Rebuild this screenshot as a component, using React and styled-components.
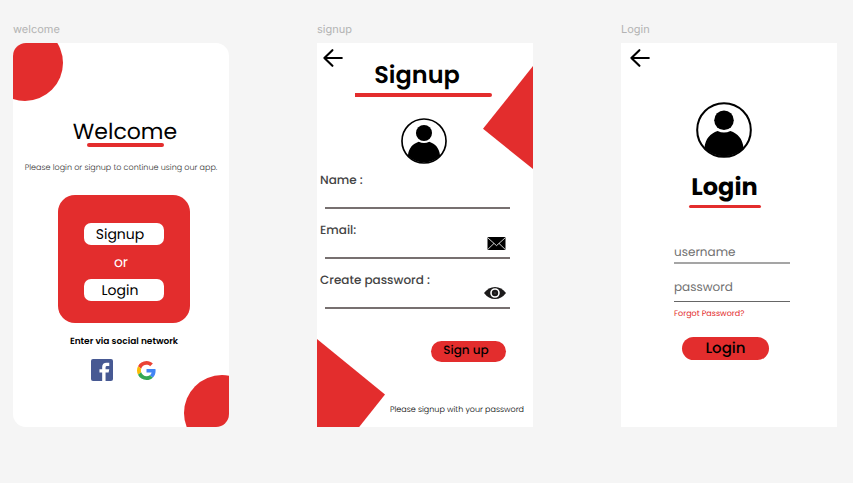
import React from "react";
import styled, { createGlobalStyle, css } from "styled-components";

const red = "#e32d2d";

const GlobalStyle = createGlobalStyle`
  *, *::before, *::after { box-sizing: border-box; }
  body {
    margin: 0;
    background: #f5f5f5;
    color: #000;
    font-family: Poppins, Inter, sans-serif;
    text-rendering: geometricPrecision;
  }
  h1, h2, p { margin: 0; }
  button, input { font-family: inherit; text-rendering: inherit; }
`;

const Board = styled.main`
  display: grid;
  grid-template-columns: repeat(3, minmax(0, 1fr));
  column-gap: 88px;
  padding: 22px 16px 56px 13px;
`;

const Artboard = styled.section`
  display: flex;
  flex-direction: column;
`;

const ArtboardName = styled.h2`
  height: 21px;
  font: 400 11px/14px Inter, sans-serif;
  color: #b3b3b3;
`;

const Screen = styled.div`
  position: relative;
  z-index: 0;
  display: flex;
  flex-direction: column;
  flex: 1;
  min-height: 384px;
  overflow: hidden;
  background: #fff;
  border-radius: ${(p) => (p.$rounded ? "13px" : "0")};
`;

const Disc = styled.span`
  position: absolute;
  z-index: -1;
  width: 76px;
  height: 76px;
  border-radius: 50%;
  background: ${red};
  ${(p) =>
    p.$corner === "top"
      ? css`top: -18px; left: -26px;`
      : css`right: -31px; bottom: -24px;`}
`;

const Shard = styled.span`
  position: absolute;
  z-index: -1;
  background: ${red};
  ${(p) =>
    p.$corner === "top"
      ? css`
          top: 23px;
          right: 0;
          width: 50px;
          height: 103px;
          clip-path: polygon(100% 0, 100% 100%, 0 61%);
        `
      : css`
          left: 0;
          bottom: 0;
          width: 68px;
          height: 88px;
          clip-path: polygon(0 0, 100% 63%, 62% 100%, 0 100%);
        `}
`;

const Header = styled.header`
  display: flex;
  flex-direction: column;
  align-items: center;
`;

const WelcomeHeader = styled(Header)`
  padding: 78px 0 0 8px;
`;

const SignupHeader = styled.header`
  display: flex;
  align-items: flex-start;
  padding-right: 42px;
`;

const LoginHeader = styled(Header)`
  padding: 13px 9px 0 0;
`;

const Title = styled.h1`
  font-size: ${(p) => p.$size}px;
  font-weight: ${(p) => p.$weight};
  line-height: ${(p) => p.$line}px;
`;

const SignupTitle = styled(Title)`
  flex: 1;
  margin-top: 16px;
  text-align: center;
`;

const Rule = styled.span`
  width: ${(p) => p.$width}px;
  height: ${(p) => p.$thick}px;
  background: ${red};
  border-radius: ${(p) => (p.$flatStart ? "0 2px 2px 0" : "2px")};
`;

const Caption = styled.p`
  margin-top: 15px;
  text-align: center;
  font-size: 8px;
  font-weight: 300;
  line-height: 12px;
  color: #333;
  white-space: nowrap;
`;

const Entry = styled.div`
  display: flex;
  flex-direction: column;
  align-items: center;
  padding: 21px 0 0 6px;
`;

const Card = styled.div`
  display: flex;
  flex-direction: column;
  align-items: center;
  width: 132px;
  padding: 28px 0 22px;
  border-radius: 17px;
  background: ${red};
`;

const ChoiceButton = styled.button`
  width: 80px;
  height: 22px;
  padding: 0 8px 0 0;
  border: 0;
  border-radius: 7px;
  background: #fff;
  color: #000;
  font-size: 14px;
  line-height: 22px;
  cursor: pointer;
`;

const Or = styled.span`
  padding-right: 6px;
  font-size: 14px;
  line-height: 34px;
  color: #fff;
`;

const SocialTitle = styled.p`
  margin-top: 13px;
  font-size: 9px;
  line-height: 12px;
  font-weight: 600;
  white-space: nowrap;
`;

const SocialRow = styled.div`
  display: flex;
  align-items: center;
  gap: 24px;
  margin-top: 11px;
  padding-right: 2px;
`;

const IconButton = styled.button`
  display: flex;
  padding: 0;
  border: 0;
  background: none;
  color: #000;
  cursor: pointer;
`;

const BackButton = styled(IconButton)`
  align-self: flex-start;
  margin: 6px 0 0 ${(p) => p.$inset}px;
`;

const CenterRow = styled.div`
  display: flex;
  justify-content: center;
  padding-right: ${(p) => p.$shift}px;
  margin-top: ${(p) => p.$top}px;
`;

const SignupForm = styled.form`
  display: flex;
  flex-direction: column;
  gap: 12px;
  padding: 7px 23px 0 3px;
`;

const Field = styled.div`
  display: flex;
  flex-direction: column;
`;

const FieldLabel = styled.label`
  font-size: 12px;
  font-weight: 500;
  line-height: 20px;
  color: #444;
`;

const FieldLine = styled.div`
  display: flex;
  align-items: center;
  height: 18px;
  margin-left: 5px;
  padding: 0 4px 12px 0;
  border-bottom: 2px solid #777070;
`;

const FieldInput = styled.input`
  flex: 1;
  min-width: 0;
  height: 16px;
  padding: 0;
  border: 0;
  outline: 0;
  background: none;
  font-size: 12px;
`;

const PillButton = styled.button`
  border: 0;
  border-radius: 12px;
  background: ${red};
  color: #000;
  font-weight: 500;
  cursor: pointer;
`;

const SignupSubmit = styled(PillButton)`
  align-self: flex-end;
  width: 75px;
  height: 21px;
  margin: 20px 4px 0 0;
  padding: 0 5px 2px 0;
  font-size: 12px;
`;

const Note = styled.p`
  margin: auto 9px 11px 0;
  text-align: right;
  font-size: 8px;
  font-weight: 300;
  line-height: 12px;
  color: #000;
`;

const LoginForm = styled.form`
  display: flex;
  flex-direction: column;
  padding: 34px 47px 0 53px;
`;

const LineInput = styled.input`
  width: 100%;
  height: ${(p) => p.$height}px;
  padding: ${(p) => p.$top}px 0 0;
  border: 0;
  border-bottom: ${(p) => p.$line};
  outline: 0;
  background: none;
  font-size: 12px;
  &::placeholder { color: #707070; opacity: 1; }
`;

const ForgotLink = styled.a`
  align-self: flex-start;
  margin-top: 6px;
  font-size: 8px;
  line-height: 12px;
  color: ${red};
  text-decoration: none;
`;

const LoginSubmit = styled(PillButton)`
  width: 87px;
  height: 23px;
  margin: 17px 0 0 8px;
  padding: 0 0 2px;
  font-size: 15px;
`;

const BackArrow = () => (
  <svg width="20" height="18" viewBox="0 0 20 18" fill="none" stroke="currentColor" strokeWidth="2.1" strokeLinecap="round" strokeLinejoin="round" aria-hidden="true">
    <path d="M18.8 9H1.4M9.4 1.2 1.4 9 9.4 16.8" />
  </svg>
);

const Avatar = ({ size }) => (
  <svg width={size} height={size} viewBox="0 0 166 166" role="img" aria-label="User">
    <circle cx="83" cy="83" r="79.5" fill="none" stroke="#000" strokeWidth="6" />
    <circle cx="83" cy="54" r="29" />
    <path d="M25 136C28 108 42 94 64 86Q83 95 102 86C124 94 138 108 141 136A80 80 0 0 1 25 136Z" />
  </svg>
);

const FacebookLogo = () => (
  <svg width="22" height="22" viewBox="0 0 65 65" aria-hidden="true">
    <rect width="65" height="65" rx="6" fill="#475993" />
    <path fill="#fff" d="M33 65V40H25V30H33V24C33 15 38 11 46 11H54V21H49C45 21 43 22 43 26V30H54L52 40H43V65Z" />
  </svg>
);

const GoogleLogo = () => (
  <svg width="19" height="19" viewBox="0 0 48 48" aria-hidden="true">
    <path fill="#ea4335" d="M24 9.5c3.54 0 6.71 1.22 9.21 3.6l6.85-6.85C35.9 2.38 30.47 0 24 0 14.62 0 6.51 5.38 2.56 13.22l7.98 6.19C12.43 13.72 17.74 9.5 24 9.5z" />
    <path fill="#4285f4" d="M46.98 24.55c0-1.57-.15-3.09-.38-4.55H24v9.02h12.94c-.58 2.96-2.26 5.48-4.78 7.18l7.73 6c4.51-4.18 7.09-10.36 7.09-17.65z" />
    <path fill="#fbbc05" d="M10.53 28.59c-.48-1.45-.76-2.99-.76-4.59s.27-3.14.76-4.59l-7.98-6.19C.92 16.46 0 20.12 0 24c0 3.88.92 7.54 2.56 10.78l7.97-6.19z" />
    <path fill="#34a853" d="M24 48c6.48 0 11.93-2.13 15.89-5.81l-7.73-6c-2.15 1.45-4.92 2.3-8.16 2.3-6.26 0-11.57-4.22-13.47-9.91l-7.98 6.19C6.51 42.62 14.62 48 24 48z" />
  </svg>
);

const MailIcon = () => (
  <svg width="19" height="13" viewBox="0 0 19 13" aria-hidden="true">
    <rect x="0.5" width="18" height="13" rx="1" />
    <path d="M1 1 9.5 8.6 18 1M1 12.2 7 6.4M18 12.2 12 6.4" fill="none" stroke="#fff" strokeWidth="0.8" />
  </svg>
);

const EyeIcon = () => (
  <svg width="22" height="12" viewBox="0 0 22 12" aria-hidden="true">
    <path d="M0 6Q4.5 0 11 0T22 6Q17.5 12 11 12T0 6Z" fill="#1c1a1b" />
    <circle cx="11" cy="6" r="4" fill="#1c1a1b" stroke="#fff" strokeWidth="1.6" />
    <circle cx="11" cy="6" r="0.5" fill="#999" />
  </svg>
);

const stop = (event) => event.preventDefault();

function WelcomeScreen() {
  return (
    <Screen $rounded>
      <Disc $corner="top" />
      <Disc $corner="bottom" />
      <WelcomeHeader>
        <Title $size={22} $weight={400} $line={22}>Welcome</Title>
        <Rule $width={77} $thick={4} />
      </WelcomeHeader>
      <Caption>Please login or signup to continue using our app.</Caption>
      <Entry>
        <Card>
          <ChoiceButton type="button">Signup</ChoiceButton>
          <Or>or</Or>
          <ChoiceButton type="button">Login</ChoiceButton>
        </Card>
        <SocialTitle>Enter via social network</SocialTitle>
        <SocialRow>
          <IconButton type="button" aria-label="Facebook"><FacebookLogo /></IconButton>
          <IconButton type="button" aria-label="Google"><GoogleLogo /></IconButton>
        </SocialRow>
      </Entry>
    </Screen>
  );
}

function SignupField({ id, label, type, children }) {
  return (
    <Field>
      <FieldLabel htmlFor={id}>{label}</FieldLabel>
      <FieldLine>
        <FieldInput id={id} type={type} />
        {children}
      </FieldLine>
    </Field>
  );
}

function SignupScreen() {
  return (
    <Screen>
      <Shard $corner="top" />
      <Shard $corner="bottom" />
      <SignupHeader>
        <BackButton type="button" aria-label="Back" $inset={6}><BackArrow /></BackButton>
        <SignupTitle $size={24} $weight={600} $line={34}>Signup</SignupTitle>
      </SignupHeader>
      <CenterRow $shift={3} $top={0}><Rule $width={137} $thick={4} $flatStart /></CenterRow>
      <CenterRow $shift={3} $top={21}><Avatar size={46} /></CenterRow>
      <SignupForm onSubmit={stop}>
        <SignupField id="name" label="Name :" type="text" />
        <SignupField id="email" label="Email:" type="email"><MailIcon /></SignupField>
        <SignupField id="new-password" label="Create password :" type="password">
          <IconButton type="button" aria-label="Show password"><EyeIcon /></IconButton>
        </SignupField>
        <SignupSubmit type="submit">Sign up</SignupSubmit>
      </SignupForm>
      <Note>Please signup with your password</Note>
    </Screen>
  );
}

function LoginScreen() {
  return (
    <Screen>
      <BackButton type="button" aria-label="Back" $inset={9}><BackArrow /></BackButton>
      <CenterRow $shift={10} $top={35}><Avatar size={56} /></CenterRow>
      <LoginHeader>
        <Title $size={24} $weight={700} $line={34}>Login</Title>
        <Rule $width={72} $thick={3} />
      </LoginHeader>
      <LoginForm onSubmit={stop}>
        <LineInput type="text" placeholder="username" aria-label="username" $height={22} $top={2} $line="2px solid #a5a5a5" />
        <LineInput type="password" placeholder="password" aria-label="password" $height={38} $top={10} $line="1px solid #666" />
        <ForgotLink href="#forgot">Forgot Password?</ForgotLink>
        <LoginSubmit type="submit">Login</LoginSubmit>
      </LoginForm>
    </Screen>
  );
}

export default function App() {
  return (
    <>
      <GlobalStyle />
      <Board>
        <Artboard>
          <ArtboardName>welcome</ArtboardName>
          <WelcomeScreen />
        </Artboard>
        <Artboard>
          <ArtboardName>signup</ArtboardName>
          <SignupScreen />
        </Artboard>
        <Artboard>
          <ArtboardName>Login</ArtboardName>
          <LoginScreen />
        </Artboard>
      </Board>
    </>
  );
}
